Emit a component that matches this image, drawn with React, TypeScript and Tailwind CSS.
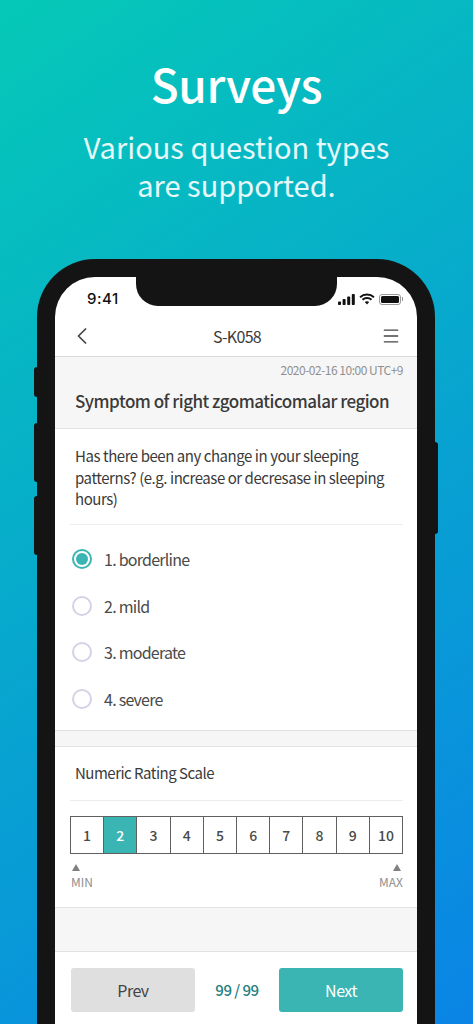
import { Menu, ChevronLeft } from "lucide-react";

const OPTIONS = ["1. borderline", "2. mild", "3. moderate", "4. severe"];
const SCALE = [1, 2, 3, 4, 5, 6, 7, 8, 9, 10];

const font = { fontFamily: '"Noto Sans CJK KR", "Noto Sans", sans-serif' };

const StatusIcons = () => (
  <div className="flex items-center gap-[4px]">
    <svg width="17" height="11" viewBox="0 0 17 11" fill="#111">
      <rect x="0" y="7.5" width="3" height="3.5" rx="0.8" />
      <rect x="4.6" y="5" width="3" height="6" rx="0.8" />
      <rect x="9.2" y="2.5" width="3" height="8.5" rx="0.8" />
      <rect x="13.8" y="0" width="3" height="11" rx="0.8" />
    </svg>
    <svg width="16" height="12" viewBox="0 0 15 11" fill="none" stroke="#111" strokeWidth="1.8">
      <path d="M1 3.8C4.6 .4 10.4 .4 14 3.8" />
      <path d="M3.3 6.2C5.6 4 9.4 4 11.7 6.2" />
      <path d="M7.5 10.6 5.4 8.4C6.6 7.3 8.4 7.3 9.6 8.4Z" fill="#111" stroke="none" />
    </svg>
    <div className="flex items-center">
      <div className="w-[22px] h-[11px] rounded-[3px] border border-[#9a9a9a] p-[1px]">
        <div className="w-full h-full rounded-[1.5px] bg-[#111]" />
      </div>
      <div className="w-[1px] h-[4px] bg-[#9a9a9a] ml-[1px]" />
    </div>
  </div>
);

const Radio = ({ checked }: { checked: boolean }) =>
  checked ? (
    <div className="w-[20px] h-[20px] rounded-full border-2 border-[#3ab5b3] flex items-center justify-center">
      <div className="w-[12px] h-[12px] rounded-full bg-[#3ab5b3]" />
    </div>
  ) : (
    <div className="w-[20px] h-[20px] rounded-full border-2 border-[#d4d3e6] bg-white" />
  );

export default function App() {
  return (
    <div
      className="w-[473px] h-[1024px] overflow-hidden flex flex-col items-center tracking-[-0.5px] bg-[linear-gradient(145deg,#05c9b7,#0a84e6)]"
      style={font}
    >
      <h1 className="mt-[53px] text-[46px] leading-[60px] tracking-[-0.4px] font-medium text-white">Surveys</h1>
      <p className="mt-[14px] text-[29px] leading-[38px] tracking-normal text-white/90 text-center">
        Various question types
        <br />
        are supported.
      </p>

      <div className="relative mt-[56px] mr-[1px] w-[398px] shrink-0 rounded-t-[58px] bg-[#141414] px-[18px] pt-[18px]">
        {/* side buttons */}
        <div className="absolute left-[-3px] top-[108px] w-[3px] h-[30px] rounded-l-sm bg-[#141414]" />
        <div className="absolute left-[-3px] top-[164px] w-[3px] h-[59px] rounded-l-sm bg-[#141414]" />
        <div className="absolute left-[-3px] top-[237px] w-[3px] h-[59px] rounded-l-sm bg-[#141414]" />
        <div className="absolute right-[-3px] top-[183px] w-[3px] h-[92px] rounded-r-sm bg-[#141414]" />
        {/* notch */}
        <div className="absolute left-[99px] top-[18px] w-[201px] h-[29px] rounded-b-[22px] bg-[#141414]" />

        <div className="h-[747px] rounded-t-[40px] overflow-hidden bg-white flex flex-col">
          <div className="h-[80px] shrink-0 flex flex-col border-b border-[#d9d9d9]">
            <div className="h-[41px] flex items-center justify-between pt-[3px] pl-[32px] pr-[14px]">
              <span className="text-[15px] font-medium text-[#111] tracking-[0.5px]" style={{ fontFamily: '"Inter", sans-serif' }}>
                9:41
              </span>
              <StatusIcons />
            </div>
            <div className="flex-1 flex items-center justify-between pl-[13px] pr-[16px] pb-[2px]">
              <ChevronLeft className="w-[28px] h-[28px] -mr-[3px] text-[#444]" strokeWidth={1.5} />
              <span className="text-[16px] tracking-[-0.7px] text-[#3a3a3a]">S-K058</span>
              <Menu className="w-[20px] h-[20px] text-[#444]" strokeWidth={1.6} />
            </div>
          </div>

          <div className="h-[72px] shrink-0 bg-[#f6f6f6] border-b border-[#e2e2e2] pl-[20px] pr-[14px] pt-[4px]">
            <div className="text-right text-[12px] leading-[18px] text-[#8f8f8f]">2020-02-16 10:00 UTC+9</div>
            <div className="mt-[9px] text-[17px] leading-[26px] font-medium text-[#3a3a3a] whitespace-nowrap">
              Symptom of right zgomaticomalar region
            </div>
          </div>

          <div className="h-[301px] shrink-0 pl-[15px] pr-[14px]">
            <div className="pl-[5px] pt-[16px] pb-[14px] border-b border-[#ededed] text-[15px] leading-[21.5px] tracking-[-0.45px] text-[#3a3a3a]">
              Has there been any change in your sleeping patterns? (e.g. increase or decresase in sleeping hours)
            </div>
            <div className="mt-[11px] flex flex-col pl-[2px]">
              {OPTIONS.map((option, i) => (
                <div key={option} className="h-[46.7px] flex items-center gap-[12px]">
                  <Radio checked={i === 0} />
                  <span className="text-[16px] tracking-[-0.75px] text-[#4a4a4a]">{option}</span>
                </div>
              ))}
            </div>
          </div>

          <div className="h-[17px] shrink-0 bg-[#f6f6f6] border-y border-[#e2e2e2]" />

          <div className="h-[160px] shrink-0 pl-[15px] pr-[14px]">
            <div className="pl-[5px] pt-[14px] pb-[15px] border-b border-[#ededed] text-[15px] leading-[24px] text-[#3a3a3a]">
              Numeric Rating Scale
            </div>
            <div className="mt-[15px] flex h-[38px] border border-[#606060]">
              {SCALE.map((n) => (
                <div
                  key={n}
                  className={
                    n === 2
                      ? "flex-1 flex items-center justify-center border-l border-[#606060] bg-[#3ab5b3] text-white text-[14px] font-medium tracking-normal"
                      : "flex-1 flex items-center justify-center border-l border-[#606060] first:border-l-0 text-[#4a4a4a] text-[14px] font-medium tracking-normal"
                  }
                >
                  {n}
                </div>
              ))}
            </div>
            <div className="mt-[10px] flex justify-between text-[12px] leading-[18px] tracking-normal text-[#8f8f8f]">
              <div className="flex flex-col items-start pl-[1px]">
                <svg width="8" height="7" viewBox="0 0 8 7" fill="#808080" className="ml-[1px] mb-[2px]">
                  <path d="M4 0 8 7H0Z" />
                </svg>
                <span>MIN</span>
              </div>
              <div className="flex flex-col items-end">
                <svg width="8" height="7" viewBox="0 0 8 7" fill="#808080" className="mr-[2px] mb-[2px]">
                  <path d="M4 0 8 7H0Z" />
                </svg>
                <span>MAX</span>
              </div>
            </div>
          </div>

          <div className="h-[45px] shrink-0 bg-[#f6f6f6] border-y border-[#e2e2e2]" />

          <div className="flex-1 pl-[16px] pr-[14px] pt-[16px]">
            <div className="flex items-center justify-between">
              <button className="w-[124px] h-[44px] rounded-[3px] bg-[#dfdfdf] text-[16px] text-[#444]">Prev</button>
              <span className="text-[15px] font-medium text-[#23807e]">99 / 99</span>
              <button className="w-[124px] h-[44px] rounded-[3px] bg-[#3ab5b3] text-[16px] text-white">Next</button>
            </div>
          </div>
        </div>
      </div>
    </div>
  );
}
